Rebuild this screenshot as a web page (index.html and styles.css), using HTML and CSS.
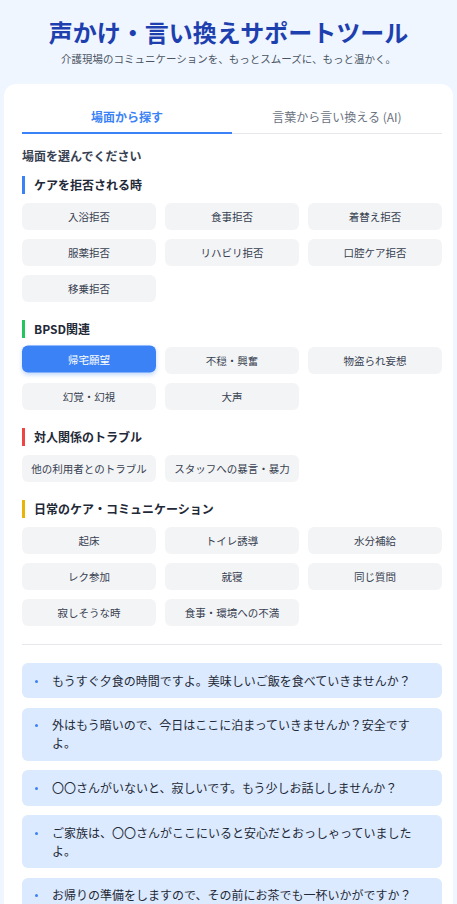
FILE: index.html
```html
<!DOCTYPE html>
<html lang="ja">
<head>
<meta charset="utf-8">
<title>声かけ・言い換えサポートツール</title>
<link rel="stylesheet" href="styles.css">
</head>
<body>
<header class="header">
  <h1 class="title">声かけ・言い換えサポートツール</h1>
  <p class="subtitle">介護現場のコミュニケーションを、もっとスムーズに、もっと温かく。</p>
</header>
<main class="card">
  <nav class="tabs">
    <div class="tab tab-active">場面から探す</div>
    <div class="tab">言葉から言い換える (AI)</div>
  </nav>
  <h2 class="prompt">場面を選んでください</h2>
  <div class="sections">
    <section class="section">
      <h3 class="sec-title bar-blue">ケアを拒否される時</h3>
      <div class="grid">
        <button class="btn">入浴拒否</button>
        <button class="btn">食事拒否</button>
        <button class="btn">着替え拒否</button>
        <button class="btn">服薬拒否</button>
        <button class="btn">リハビリ拒否</button>
        <button class="btn">口腔ケア拒否</button>
        <button class="btn">移乗拒否</button>
      </div>
    </section>
    <section class="section">
      <h3 class="sec-title bar-green">BPSD関連</h3>
      <div class="grid">
        <button class="btn btn-active">帰宅願望</button>
        <button class="btn">不穏・興奮</button>
        <button class="btn">物盗られ妄想</button>
        <button class="btn">幻覚・幻視</button>
        <button class="btn">大声</button>
      </div>
    </section>
    <section class="section">
      <h3 class="sec-title bar-red">対人関係のトラブル</h3>
      <div class="grid">
        <button class="btn">他の利用者とのトラブル</button>
        <button class="btn">スタッフへの暴言・暴力</button>
      </div>
    </section>
    <section class="section">
      <h3 class="sec-title bar-yellow">日常のケア・コミュニケーション</h3>
      <div class="grid">
        <button class="btn">起床</button>
        <button class="btn">トイレ誘導</button>
        <button class="btn">水分補給</button>
        <button class="btn">レク参加</button>
        <button class="btn">就寝</button>
        <button class="btn">同じ質問</button>
        <button class="btn">寂しそうな時</button>
        <button class="btn">食事・環境への不満</button>
      </div>
    </section>
  </div>
  <hr class="divider">
  <ul class="phrases">
    <li class="phrase"><span class="dot"></span><span class="phrase-text">もうすぐ夕食の時間ですよ。美味しいご飯を食べていきませんか？</span></li>
    <li class="phrase"><span class="dot"></span><span class="phrase-text">外はもう暗いので、今日はここに泊まっていきませんか？安全ですよ。</span></li>
    <li class="phrase"><span class="dot"></span><span class="phrase-text">〇〇さんがいないと、寂しいです。もう少しお話ししませんか？</span></li>
    <li class="phrase"><span class="dot"></span><span class="phrase-text">ご家族は、〇〇さんがここにいると安心だとおっしゃっていましたよ。</span></li>
    <li class="phrase"><span class="dot"></span><span class="phrase-text">お帰りの準備をしますので、その前にお茶でも一杯いかがですか？</span></li>
  </ul>
</main>
</body>
</html>
```
FILE: styles.css
```css
* { box-sizing: border-box; }
html, body { margin: 0; padding: 0; }
body {
  background: #eff6ff;
  font-family: "Noto Sans CJK JP", "Noto Sans", sans-serif;
  color: #1f2937;
  overflow: hidden;
}
.header {
  text-align: center;
  padding-top: 16px;
}
.title {
  margin: 0;
  font-size: 24px;
  line-height: 32px;
  font-weight: 700;
  color: #1e40af;
}
.subtitle {
  margin: 3px 0 0;
  font-size: 10.5px;
  line-height: 15px;
  color: #4b5563;
}
.card {
  margin: 18px 4px 0;
  background: #ffffff;
  border-radius: 12px 12px 0 0;
  padding: 18px 11px 40px 18px;
}
.tabs {
  display: flex;
  border-bottom: 1px solid #e5e7eb;
}
.tab {
  flex: 1;
  text-align: center;
  font-size: 12px;
  line-height: 18px;
  padding: 6px 0;
  color: #6b7280;
  border-bottom: 2px solid transparent;
  margin-bottom: -1px;
}
.tab-active {
  color: #3b82f6;
  font-weight: 700;
  border-bottom-color: #3b82f6;
}
.prompt {
  margin: 13px 0 0;
  font-size: 12px;
  line-height: 18px;
  font-weight: 700;
  color: #374151;
}
.sections {
  margin-top: 11px;
  display: flex;
  flex-direction: column;
  gap: 18px;
}
.sec-title {
  margin: 0 0 9px;
  font-size: 12px;
  line-height: 18px;
  font-weight: 700;
  color: #1f2937;
  border-left: 3px solid #3b82f6;
  padding-left: 9px;
}
.bar-blue { border-left-color: #3b82f6; }
.bar-green { border-left-color: #22c55e; }
.bar-red { border-left-color: #ef4444; }
.bar-yellow { border-left-color: #eab308; }
.grid {
  display: grid;
  grid-template-columns: repeat(3, 1fr);
  gap: 9px;
}
.btn {
  font-family: inherit;
  font-size: 10.5px;
  line-height: 15px;
  padding: 6px 4px;
  border: none;
  border-radius: 6px;
  background: #f3f4f6;
  color: #374151;
  text-align: center;
  white-space: nowrap;
}
.btn-active {
  background: #3b82f6;
  color: #ffffff;
  transform: translateY(-1.5px);
  box-shadow: 0 2px 4px rgba(59, 130, 246, 0.3);
}
.divider {
  margin: 18px 0 0;
  border: none;
  border-top: 1px solid #e5e7eb;
}
.phrases {
  list-style: none;
  margin: 18px 0 0;
  padding: 0;
  display: flex;
  flex-direction: column;
  gap: 9.4px;
}
.phrase {
  display: flex;
  align-items: flex-start;
  background: #dbeafe;
  border-radius: 6px;
  padding: 8.65px 24px 8.65px 13px;
  font-size: 12px;
  line-height: 18px;
  color: #1f2937;
}
.dot {
  flex: none;
  width: 3px;
  height: 3px;
  border-radius: 50%;
  background: #3b82f6;
  margin-top: 8px;
  margin-right: 14px;
}
.phrase-text { flex: 1; }
```
